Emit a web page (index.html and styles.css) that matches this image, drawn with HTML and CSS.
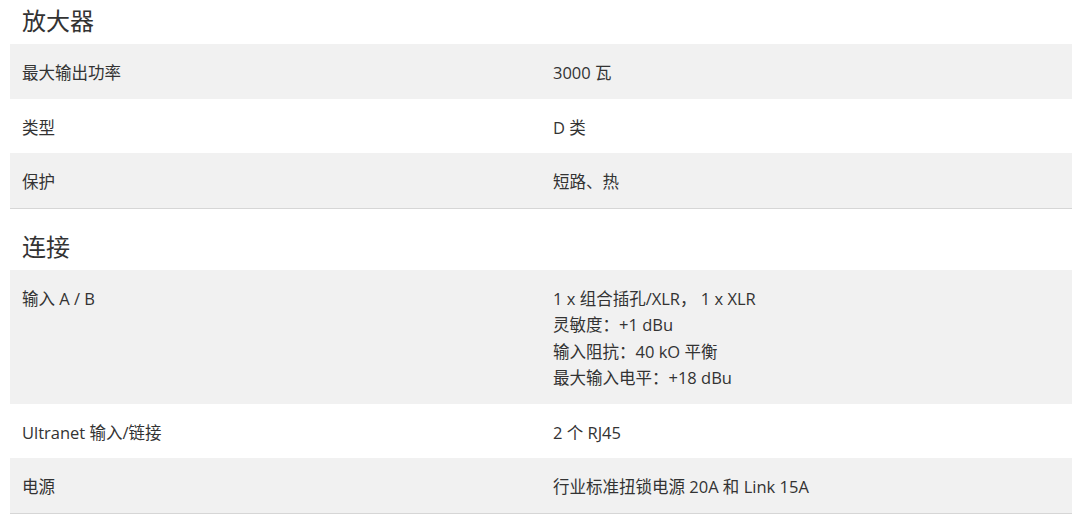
FILE: index.html
```html
<!DOCTYPE html>
<html lang="zh-CN">
<head>
<meta charset="utf-8">
<title>规格</title>
<link rel="stylesheet" href="styles.css">
</head>
<body>
<div class="specs">
  <section class="group">
    <h2 class="group-title">放大器</h2>
    <div class="table">
      <div class="row"><div class="cell">最大输出功率</div><div class="cell">3000 瓦</div></div>
      <div class="row"><div class="cell">类型</div><div class="cell">D 类</div></div>
      <div class="row"><div class="cell">保护</div><div class="cell">短路、热</div></div>
    </div>
  </section>
  <section class="group">
    <h2 class="group-title">连接</h2>
    <div class="table">
      <div class="row"><div class="cell">输入 A / B</div><div class="cell">1 x 组合插孔/XLR， 1 x XLR<br>灵敏度：+1 dBu<br>输入阻抗：40 kO 平衡<br>最大输入电平：+18 dBu</div></div>
      <div class="row"><div class="cell">Ultranet 输入/链接</div><div class="cell">2 个 RJ45</div></div>
      <div class="row"><div class="cell">电源</div><div class="cell">行业标准扭锁电源 20A 和 Link 15A</div></div>
    </div>
  </section>
</div>
</body>
</html>
```
FILE: styles.css
```css
html, body {
  margin: 0;
  padding: 0;
  background: #ffffff;
}
body {
  font-family: "Open Sans", "Noto Sans CJK SC", sans-serif;
  color: #333333;
}
.specs {
  padding: 0 16px 0 10px;
}
.group + .group {
  margin-top: 17px;
}
.group-title {
  margin: 0;
  padding-left: 12px;
  height: 44px;
  line-height: 42px;
  font-size: 24px;
  font-weight: normal;
  color: #333333;
}
.table {
  border-bottom: 1px solid #d6d6d6;
}
.row {
  display: grid;
  grid-template-columns: 1fr 1fr;
}
.row:nth-child(odd) {
  background: #f1f1f1;
}
.cell {
  padding: 16px 12px 12px;
  font-size: 16.5px;
  line-height: 26.5px;
}
```
